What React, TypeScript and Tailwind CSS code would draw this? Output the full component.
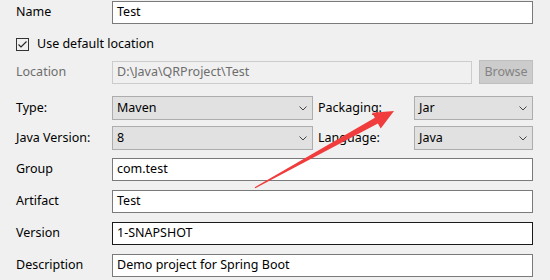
import React from "react";

const font = { fontFamily: '"Noto Sans", "Open Sans", sans-serif' };

function Chevron() {
  return (
    <svg width="8" height="5" viewBox="0 0 8 5" className="shrink-0">
      <path d="M0.5 0.5 L4 4 L7.5 0.5" fill="none" stroke="#444" strokeWidth="1" />
    </svg>
  );
}

function Combo({ value, w }: { value: string; w: string }) {
  return (
    <div className={`${w} h-[24px] border border-[#adadad] bg-[#e1e1e1] flex items-center justify-between pl-[4px] pr-[5px] text-black`}>
      <span>{value}</span>
      <Chevron />
    </div>
  );
}

function TextField({ value, focused }: { value: string; focused?: boolean }) {
  return (
    <div
      className={`w-[421px] h-[23px] bg-white border ${focused ? "border-[#1a1a1a]" : "border-[#7a7a7a]"} flex items-center pl-[4px] text-black`}
    >
      {value}
    </div>
  );
}

function Label({ children, gray }: { children: React.ReactNode; gray?: boolean }) {
  return <div className={`w-[96px] shrink-0 ${gray ? "text-[#6d6d6d]" : "text-black"}`}>{children}</div>;
}

export default function App() {
  return (
    <div className="relative w-[550px] h-[280px] overflow-hidden bg-[#f0f0f0] text-[12.5px] leading-none" style={font}>
      <div className="flex flex-col pl-4 pt-[1px]">
        <div className="flex items-center">
          <Label>Name</Label>
          <TextField value="Test" />
        </div>
        <div className="flex items-center mt-[14px] h-[13px]">
          <div className="w-[13px] h-[13px] border border-[#333] bg-transparent flex items-center justify-center">
            <svg width="11" height="11" viewBox="0 0 11 11">
              <path d="M1.5 5.5 L4 8 L9.5 2.5" fill="none" stroke="#222" strokeWidth="1.1" />
            </svg>
          </div>
          <span className="ml-[8px] text-black">Use default location</span>
        </div>
        <div className="flex items-center mt-[9px]">
          <Label gray>Location</Label>
          <div className="w-[360px] h-[23px] border border-[#cccccc] bg-[#f0f0f0] flex items-center pl-[4px] text-[#6d6d6d]">
            D:\Java\QRProject\Test
          </div>
          <div className="ml-[7px] w-[54px] h-[24px] border border-[#bfbfbf] bg-[#cccccc] flex items-center justify-center text-[#838383]">
            Browse
          </div>
        </div>
        <div className="flex items-center mt-[12px]">
          <Label>Type:</Label>
          <Combo value="Maven" w="w-[201px]" />
          <div className="w-[101px] shrink-0 pl-[5px]">Packaging:</div>
          <Combo value="Jar" w="w-[119px]" />
        </div>
        <div className="flex items-center mt-[6px]">
          <Label>Java Version:</Label>
          <Combo value="8" w="w-[201px]" />
          <div className="w-[101px] shrink-0 pl-[5px]">Language:</div>
          <Combo value="Java" w="w-[119px]" />
        </div>
        <div className="flex items-center mt-[8px]">
          <Label>Group</Label>
          <TextField value="com.test" />
        </div>
        <div className="flex items-center mt-[9px]">
          <Label>Artifact</Label>
          <TextField value="Test" />
        </div>
        <div className="flex items-center mt-[9px]">
          <Label>Version</Label>
          <TextField value="1-SNAPSHOT" focused />
        </div>
        <div className="flex items-center mt-[9px]">
          <Label>Description</Label>
          <TextField value="Demo project for Spring Boot" />
        </div>
      </div>
      <svg className="absolute left-0 top-0 pointer-events-none" width="550" height="280" viewBox="0 0 550 280">
        <polygon
          points="255.3,188.3 377.9,123.4 380.7,128.5 394,111 372.1,112.7 374.9,117.8 254.7,187.2"
          fill="#f03c3c"
        />
      </svg>
    </div>
  );
}
